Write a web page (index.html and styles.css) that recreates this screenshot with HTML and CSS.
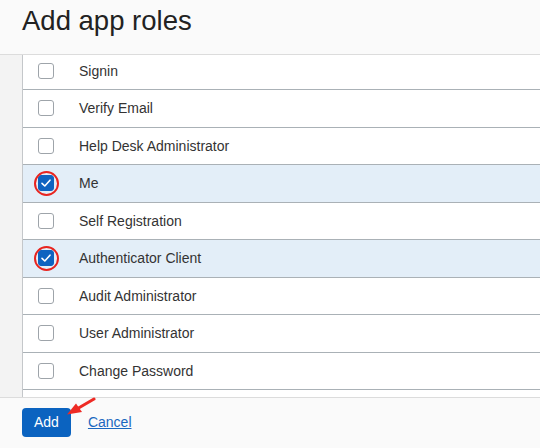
FILE: index.html
```html
<!DOCTYPE html>
<html>
<head>
<meta charset="utf-8">
<link rel="stylesheet" href="styles.css">
</head>
<body>
<div class="page">
  <header class="header"><h1 class="title">Add app roles</h1></header>
  <main class="content">
    <div class="gutter"></div>
    <div class="list-wrap">
      <ul class="list">
        <li class="row"><span class="cb"></span><span class="label">Signin</span></li>
        <li class="row"><span class="cb"></span><span class="label">Verify Email</span></li>
        <li class="row"><span class="cb"></span><span class="label">Help Desk Administrator</span></li>
        <li class="row selected"><span class="cb checked"><svg viewBox="0 0 16 16" width="16" height="16"><path d="M4 8.3 L6.8 11 L12 5.2" fill="none" stroke="#fff" stroke-width="1.6" stroke-linecap="round" stroke-linejoin="round"/></svg><span class="ring"></span></span><span class="label">Me</span></li>
        <li class="row"><span class="cb"></span><span class="label">Self Registration</span></li>
        <li class="row selected"><span class="cb checked"><svg viewBox="0 0 16 16" width="16" height="16"><path d="M4 8.3 L6.8 11 L12 5.2" fill="none" stroke="#fff" stroke-width="1.6" stroke-linecap="round" stroke-linejoin="round"/></svg><span class="ring"></span></span><span class="label">Authenticator Client</span></li>
        <li class="row"><span class="cb"></span><span class="label">Audit Administrator</span></li>
        <li class="row"><span class="cb"></span><span class="label">User Administrator</span></li>
        <li class="row"><span class="cb"></span><span class="label">Change Password</span></li>
        <li class="row"></li>
      </ul>
    </div>
  </main>
  <footer class="footer">
    <button class="btn-add">Add</button>
    <a class="cancel" href="#">Cancel</a>
    <svg class="arrow" width="40" height="24" viewBox="0 0 40 24"><line x1="33" y1="2" x2="15" y2="12.5" stroke="#ee2a24" stroke-width="3" stroke-linecap="round"/><polygon points="6,17.5 15,6.5 21,15" fill="#ee2a24"/></svg>
  </footer>
</div>
</body>
</html>
```

FILE: styles.css
```css
* { box-sizing: border-box; }
html, body { margin: 0; padding: 0; }
body {
  font-family: "Liberation Sans", Arial, sans-serif;
  color: #333;
  background: #fafafa;
  width: 540px;
  height: 448px;
  overflow: hidden;
}
.page {
  display: flex;
  flex-direction: column;
  height: 448px;
}
.header {
  height: 55px;
  background: #fafafa;
  border-bottom: 1px solid #dcdcdc;
  padding: 0 22px;
  flex: none;
}
.title {
  margin: 0;
  font-weight: normal;
  font-size: 27.5px;
  line-height: 1;
  color: #222;
  padding-top: 7px;
}
.content {
  flex: none;
  height: 342px;
  display: flex;
  overflow: hidden;
  background: #fff;
}
.gutter {
  width: 22px;
  background: #f3f3f3;
  flex: none;
}
.list-wrap {
  flex: 1;
  border-left: 1px solid #c4c7ca;
  overflow: hidden;
}
.list {
  list-style: none;
  margin: -2.5px 0 0 0;
  padding: 0;
}
.row {
  height: 37.5px;
  border-bottom: 1px solid #aab1b6;
  display: flex;
  align-items: center;
  padding-left: 15px;
  font-size: 14px;
  color: #333;
}
.row.selected { background: #e3eef8; }
.cb {
  position: relative;
  width: 16px;
  height: 16px;
  border: 1px solid #9ea4aa;
  border-radius: 3px;
  background: #fff;
  flex: none;
  margin-right: 25px;
}
.cb.checked {
  background: #0e63c0;
  border-color: #0e63c0;
}
.cb svg { position: absolute; left: -1px; top: -1px; }
.ring {
  position: absolute;
  left: -5.5px;
  top: -5.5px;
  width: 25px;
  height: 25px;
  border: 2.5px solid #e8241f;
  border-radius: 50%;
}
.footer {
  position: relative;
  flex: 1;
  background: #fafafa;
  border-top: 1px solid #dcdcdc;
  display: flex;
  align-items: center;
  padding: 0 22px 2px;
  gap: 17px;
}
.btn-add {
  height: 29px;
  padding: 0 12px;
  border: none;
  border-radius: 4px;
  background: #0b63c0;
  color: #fff;
  font-family: "Liberation Sans", Arial, sans-serif;
  font-size: 14px;
}
.cancel {
  color: #1a68c0;
  font-size: 14px;
  text-decoration: underline;
}
.arrow {
  position: absolute;
  left: 61px;
  top: -1px;
}
```
